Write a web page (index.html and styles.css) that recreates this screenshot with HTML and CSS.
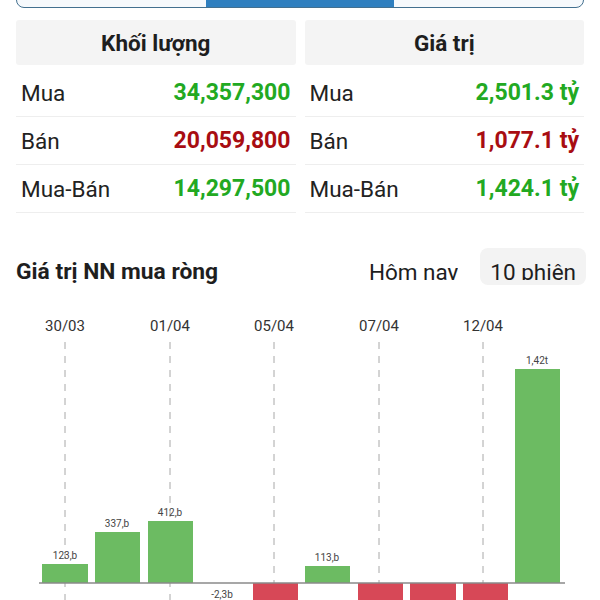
FILE: index.html
```html
<!DOCTYPE html>
<html>
<head>
<meta charset="utf-8">
<meta content="width=device-width, initial-scale=1.0" name="viewport">
<title>Giao dịch NN</title>
<link rel="stylesheet" href="styles.css">
</head>
<body>
<div class="page">
  <nav class="tabs">
    <a></a>
    <a class="on"></a>
    <a></a>
  </nav>

  <div class="stats">
    <div class="card">
      <h3>Khối lượng</h3>
      <div class="row"><span>Mua</span><b class="up">34,357,300</b></div>
      <div class="row"><span>Bán</span><b class="down">20,059,800</b></div>
      <div class="row"><span>Mua-Bán</span><b class="up">14,297,500</b></div>
    </div>
    <div class="card">
      <h3>Giá trị</h3>
      <div class="row"><span>Mua</span><b class="up">2,501.3 tỷ</b></div>
      <div class="row"><span>Bán</span><b class="down">1,077.1 tỷ</b></div>
      <div class="row"><span>Mua-Bán</span><b class="up">1,424.1 tỷ</b></div>
    </div>
  </div>

  <div class="head">
    <h2>Giá trị NN mua ròng</h2>
    <div class="sw">
      <a><span>Hôm nay</span></a>
      <a class="on"><span>10 phiên</span></a>
    </div>
  </div>
</div>

<svg class="chart" width="600" height="300" viewBox="0 300 600 300">
  <g class="dates">
    <text x="65" y="331">30/03</text>
    <text x="170" y="331">01/04</text>
    <text x="274" y="331">05/04</text>
    <text x="379" y="331">07/04</text>
    <text x="483" y="331">12/04</text>
  </g>
  <g class="grid">
    <line x1="65" y1="342" x2="65" y2="600"/>
    <line x1="170" y1="342" x2="170" y2="600"/>
    <line x1="274" y1="342" x2="274" y2="600"/>
    <line x1="379" y1="342" x2="379" y2="600"/>
    <line x1="483" y1="342" x2="483" y2="600"/>
  </g>
  <g class="pos">
    <rect x="42" y="564" width="46" height="19"/>
    <rect x="95" y="532" width="45" height="51"/>
    <rect x="148" y="521" width="45" height="62"/>
    <rect x="305" y="566" width="45" height="17"/>
    <rect x="515" y="369" width="45" height="214"/>
  </g>
  <g class="neg">
    <rect x="253" y="583" width="45" height="40"/>
    <rect x="358" y="583" width="45" height="40"/>
    <rect x="410" y="583" width="46" height="40"/>
    <rect x="463" y="583" width="45" height="40"/>
  </g>
  <line class="axis" x1="39" y1="583" x2="565" y2="583"/>
  <g class="vals">
    <text x="65" y="559">123,b</text>
    <text x="117" y="527">337,b</text>
    <text x="170" y="516">412,b</text>
    <text x="222" y="598">-2,3b</text>
    <text x="327" y="561">113,b</text>
    <text x="537" y="364">1,42t</text>
  </g>
</svg>
</body>
</html>
```

FILE: styles.css
```css
html,body{margin:0;padding:0;background:#fff;overflow:hidden}
body{font-family:Roboto,'Liberation Sans',sans-serif;color:#222;width:600px;height:600px}
.page{padding:0 16px}

/* top switch, only its bottom edge shows */
.tabs{display:flex;height:40px;margin-top:-34px;border:1.5px solid #43708f;border-radius:8px;overflow:hidden;background:#f6f9fc}
.tabs a{flex:1}
.tabs .on{background:#2f7fbf}

.stats{display:flex;gap:9px;margin-top:12px}
.card{flex:1}
.card h3{margin:0 0 4px;height:45px;line-height:46px;background:#f4f4f4;border-radius:3px;text-align:center;font-size:22.5px;font-weight:700;color:#1e1e1e}
.row{display:flex;justify-content:space-between;align-items:center;height:47px;border-bottom:1px solid #eeeeee;padding:0 5px;font-size:22.5px}
.row span{color:#222}
.row b{font-size:23px;font-weight:700}
.up{color:#22a922}
.down{color:#a80d12}

.head{display:flex;justify-content:space-between;align-items:flex-start;margin-top:35px}
.head h2{margin:0;padding-top:10px;font-size:22.8px;font-weight:700;color:#1e1e1e}
.sw{display:flex;gap:12px;margin-right:-2px}
.sw a{display:block;height:37px;padding:0 10px;border-radius:8px}
.sw a span{display:block;height:21px;margin-top:11px;overflow:hidden;font-size:22.5px;line-height:26px;color:#1e1e1e}
.sw .on{background:#f3f3f3}

.chart{display:block;position:absolute;left:0;top:300px}
.dates text{font-size:15px;fill:#333;text-anchor:middle}
.grid line{stroke:#a8a8a8;stroke-width:1;stroke-dasharray:7 7}
.pos rect{fill:#6cbb62}
.neg rect{fill:#d74857}
.axis{stroke:#8a8a8a;stroke-width:1.5}
.vals text{font-size:10px;fill:#444;text-anchor:middle}
```
